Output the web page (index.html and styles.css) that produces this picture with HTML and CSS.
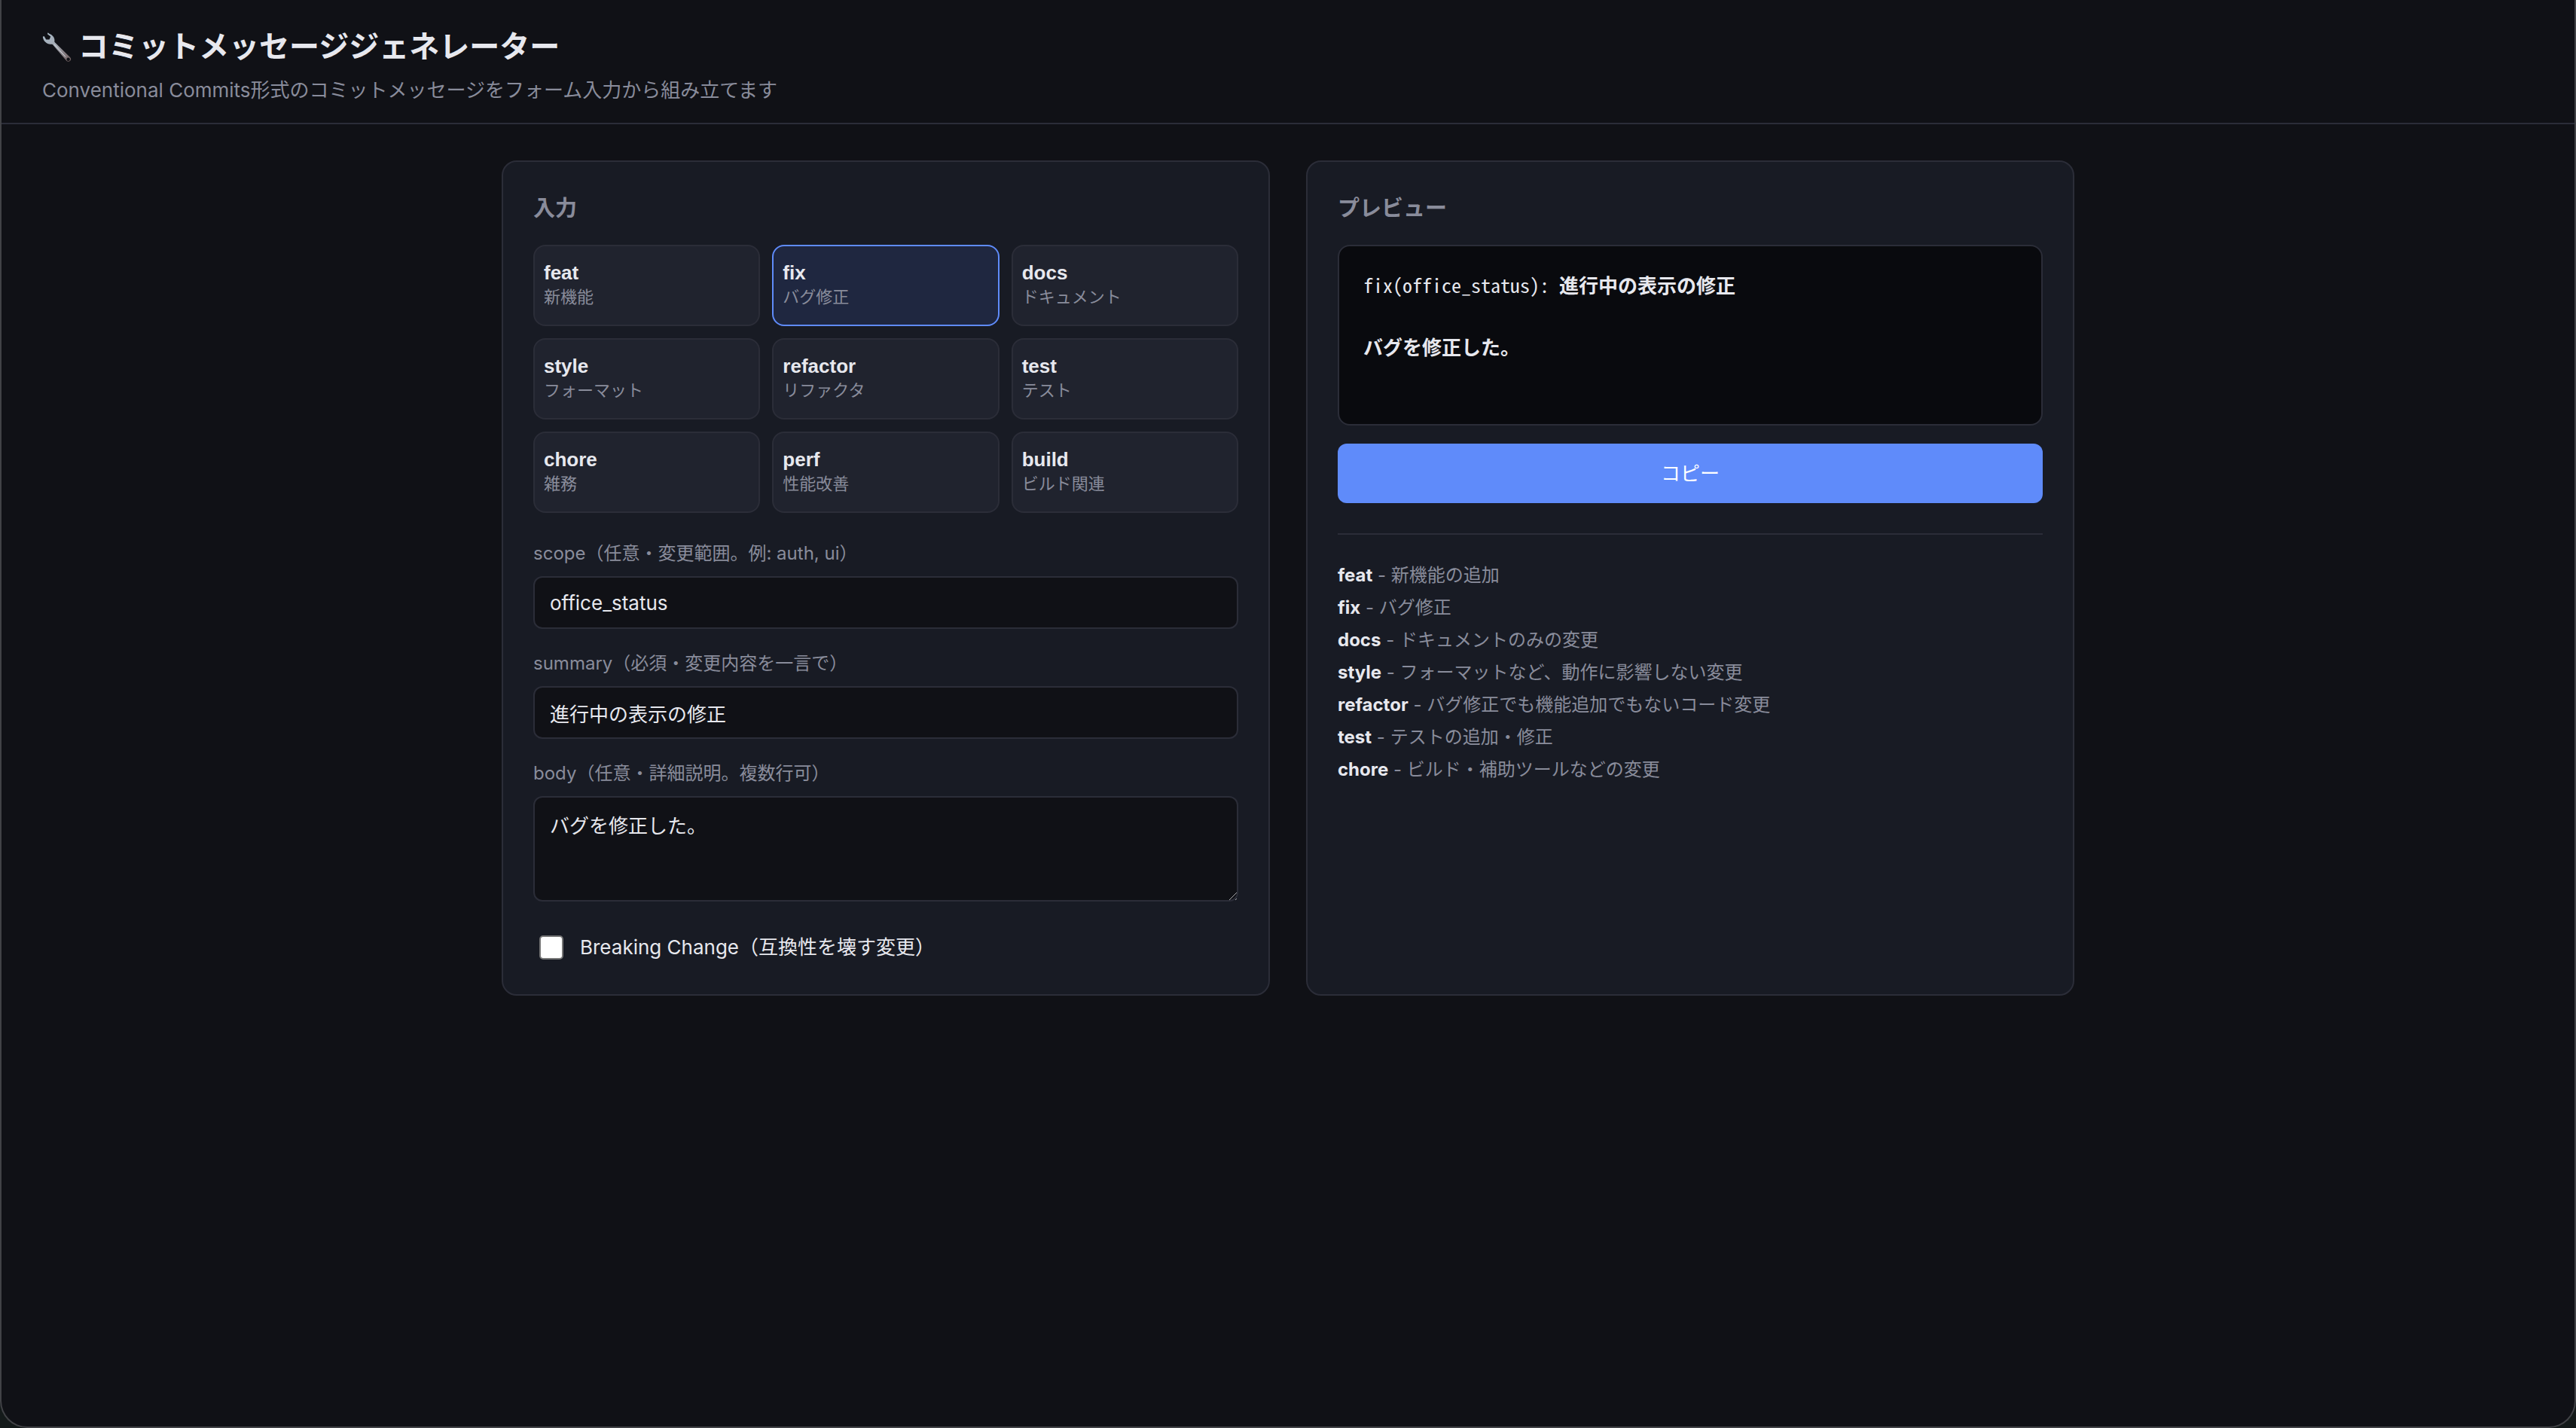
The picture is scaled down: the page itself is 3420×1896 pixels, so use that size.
FILE: index.html
```html
<!DOCTYPE html>
<html lang="ja">
  <head>
    <meta charset="UTF-8" />
    <meta name="viewport" content="width=device-width, initial-scale=1.0" />
    <title>コミットメッセージジェネレーター</title>
    <link rel="stylesheet" href="styles.css">
  </head>
  <body>
    <header class="header">
      <h1>
        <svg class="wrench" viewBox="0 0 40 40" aria-hidden="true">
          <defs>
            <linearGradient id="steel" x1="0" y1="0" x2="1" y2="1">
              <stop offset="0" stop-color="#a9bccb" />
              <stop offset="0.45" stop-color="#a3a8b1" />
              <stop offset="1" stop-color="#6d5a5a" />
            </linearGradient>
          </defs>
          <path fill="url(#steel)" fill-rule="evenodd" d="M7.500 1.200 L9.800 3 C13.500 4.200 16.300 7.600 16.400 11 C16.400 12.600 16.200 13.400 16.600 14 L37 34 C40.300 37 36 41.500 32.500 39 L14 17.200 C13.200 16.400 12.400 16.700 11 16.700 C6 16.700 1.300 12.500 .8 6.800 L2.600 6 L5.200 10.600 L9.600 10.400 L11.200 6.400 L7 3.200 Z M34.600 34.600 A2.200 2.200 0 1 0 34.700 34.600 Z" />
          <path fill="none" stroke="#d5dde4" stroke-width="1" d="M16 17 L31 33.500" />
        </svg>
        コミットメッセージジェネレーター
      </h1>
      <p>Conventional Commits形式のコミットメッセージをフォーム入力から組み立てます</p>
    </header>

    <main class="container">
      <section class="card">
        <h2>入力</h2>
        <div class="type-grid">
          <button type="button" class="type-button"><strong>feat</strong><span>新機能</span></button>
          <button type="button" class="type-button active"><strong>fix</strong><span>バグ修正</span></button>
          <button type="button" class="type-button"><strong>docs</strong><span>ドキュメント</span></button>
          <button type="button" class="type-button"><strong>style</strong><span>フォーマット</span></button>
          <button type="button" class="type-button"><strong>refactor</strong><span>リファクタ</span></button>
          <button type="button" class="type-button"><strong>test</strong><span>テスト</span></button>
          <button type="button" class="type-button"><strong>chore</strong><span>雑務</span></button>
          <button type="button" class="type-button"><strong>perf</strong><span>性能改善</span></button>
          <button type="button" class="type-button"><strong>build</strong><span>ビルド関連</span></button>
        </div>

        <div class="field">
          <label for="scope">scope（任意・変更範囲。例: auth, ui）</label>
          <input type="text" id="scope" value="office_status" />
        </div>
        <div class="field">
          <label for="summary">summary（必須・変更内容を一言で）</label>
          <input type="text" id="summary" value="進行中の表示の修正" />
        </div>
        <div class="field">
          <label for="body">body（任意・詳細説明。複数行可）</label>
          <textarea id="body">バグを修正した。</textarea>
        </div>

        <div class="check-row">
          <input type="checkbox" id="breaking" />
          <label for="breaking">Breaking Change（互換性を壊す変更）</label>
        </div>
      </section>

      <section class="card">
        <h2>プレビュー</h2>
        <div class="preview">
          <div class="preview-head">
            <code>fix(office_status):</code>
            <span>進行中の表示の修正</span>
          </div>
          <div class="preview-body">バグを修正した。</div>
        </div>
        <button type="button" class="copy-button">コピー</button>

        <ul class="legend">
          <li><strong>feat</strong> - 新機能の追加</li>
          <li><strong>fix</strong> - バグ修正</li>
          <li><strong>docs</strong> - ドキュメントのみの変更</li>
          <li><strong>style</strong> - フォーマットなど、動作に影響しない変更</li>
          <li><strong>refactor</strong> - バグ修正でも機能追加でもないコード変更</li>
          <li><strong>test</strong> - テストの追加・修正</li>
          <li><strong>chore</strong> - ビルド・補助ツールなどの変更</li>
        </ul>
      </section>
    </main>
  </body>
</html>
```
FILE: styles.css
```css
:root {
  --bg: #101116;
  --card: #181b24;
  --item: #20232e;
  --border: #2b2d38;
  --text: #e7e8ee;
  --muted: #898c9b;
  --accent: #5f8bfa;
}

* {
  box-sizing: border-box;
}

html {
  background: #141a1a;
}

body {
  min-height: 100vh;
  margin: 0;
  border: 2px solid #414246;
  border-top: none;
  border-radius: 0 0 36px 36px;
  background: var(--bg);
  color: var(--text);
  font-family: Inter, "Noto Sans CJK JP", sans-serif;
  font-size: 26px;
}

.header {
  padding: 32px 54px 24px;
  border-bottom: 2px solid var(--border);
}

.header h1 {
  display: flex;
  align-items: center;
  gap: 8px;
  margin: 0 0 8px;
  font-size: 40px;
  line-height: 60px;
}

.wrench {
  width: 40px;
  height: 40px;
}

.header p {
  margin: 0;
  color: var(--muted);
  line-height: 39px;
}

.container {
  display: grid;
  grid-template-columns: 1fr 1fr;
  gap: 48px;
  max-width: 2200px;
  margin: 0 auto;
  padding: 48px 56px;
}

.card {
  padding: 40px;
  border: 2px solid var(--border);
  border-radius: 20px;
  background: var(--card);
}

.card h2 {
  margin: 0 0 26px;
  color: var(--muted);
  font-size: 29px;
  line-height: 44px;
}

.type-grid {
  display: grid;
  grid-template-columns: repeat(3, 1fr);
  gap: 16px;
  margin-bottom: 36px;
}

.type-button {
  display: flex;
  flex-direction: column;
  height: 108px;
  padding: 20px 12px;
  border: 2px solid var(--border);
  border-radius: 16px;
  background: var(--item);
  color: var(--text);
  font-family: "Liberation Sans", "Noto Sans CJK JP", sans-serif;
  text-align: left;
  cursor: pointer;
}

.type-button strong {
  font-size: 26px;
  line-height: 30px;
}

.type-button span {
  color: var(--muted);
  font-size: 22px;
  line-height: 36px;
}

.type-button.active {
  border-color: var(--accent);
  background: #1f2740;
}

.field {
  margin-bottom: 28px;
}

.field label {
  display: block;
  margin-bottom: 12px;
  color: var(--muted);
  font-size: 24px;
  line-height: 36px;
}

.field input,
.field textarea {
  display: block;
  width: 100%;
  height: 70px;
  padding: 16px 20px;
  border: 2px solid var(--border);
  border-radius: 12px;
  background: var(--bg);
  color: var(--text);
  font: inherit;
}

.field textarea {
  height: 140px;
  padding-top: 18px;
  line-height: 39px;
  resize: vertical;
}

.field textarea::-webkit-scrollbar {
  width: 18px;
}

/* リサイズハンドル */
.field textarea::-webkit-resizer {
  background: linear-gradient(135deg, transparent 54%, #a9aaad 54%, #a9aaad 60%, transparent 60%, transparent 83%, #a9aaad 83%, #a9aaad 89%, transparent 89%) 2px 2px / 14px 14px no-repeat;
}

.check-row {
  display: flex;
  align-items: center;
  gap: 22px;
  margin-top: 39px;
  padding-left: 8px;
  line-height: 44px;
}

.check-row input {
  width: 32px;
  height: 32px;
  margin: 0;
  border: 2px solid #767676;
  border-radius: 5px;
  background: #fff;
  appearance: none;
}

.check-row input:checked {
  background: var(--accent);
}

.preview {
  display: flex;
  flex-direction: column;
  gap: 40px;
  min-height: 240px;
  margin-bottom: 24px;
  padding: 30px 32px;
  border: 2px solid var(--border);
  border-radius: 16px;
  background: #090a0e;
  font-family: "Noto Sans Mono CJK JP", "Noto Sans CJK JP", monospace;
  font-weight: 600;
  line-height: 42px;
}

.preview-head {
  display: flex;
  flex-wrap: wrap;
  column-gap: 13px;
}

.preview-head code {
  font-family: inherit;
  font-weight: 400;
}

.copy-button {
  width: 100%;
  height: 79px;
  padding: 0 0 4px;
  border: none;
  border-radius: 12px;
  background: var(--accent);
  color: #fff;
  font: inherit;
  cursor: pointer;
}

.legend {
  margin: 40px 0 0;
  padding: 32px 0 0;
  border-top: 2px solid var(--border);
  color: var(--muted);
  font-size: 24px;
  line-height: 43px;
  list-style: none;
}

.legend strong {
  color: var(--text);
}
```
